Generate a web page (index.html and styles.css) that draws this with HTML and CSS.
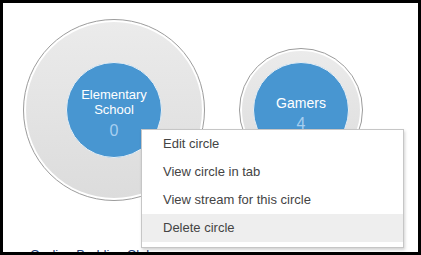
FILE: index.html
```html
<!DOCTYPE html>
<html>
<head>
<meta charset="utf-8">
<link rel="stylesheet" href="styles.css">
</head>
<body>
<div class="frame">
  <div class="circle circle-big">
    <div class="ring">
      <div class="core">
        <span class="name">Elementary<br>School</span>
        <span class="count">0</span>
      </div>
    </div>
  </div>
  <div class="circle circle-small">
    <div class="ring">
      <div class="core">
        <span class="name">Gamers</span>
        <span class="count">4</span>
      </div>
    </div>
  </div>
  <div class="label">Cycling Buddies Club</div>
  <ul class="menu">
    <li class="item">Edit circle</li>
    <li class="item">View circle in tab</li>
    <li class="item">View stream for this circle</li>
    <li class="item active">Delete circle</li>
  </ul>
</div>
</body>
</html>
```
FILE: styles.css
```css
html, body {
  margin: 0;
  padding: 0;
  background: #000;
}
.frame {
  position: relative;
  width: 421px;
  height: 255px;
  box-sizing: border-box;
  border: 3px solid #000;
  background: #fff;
  overflow: hidden;
  font-family: "Liberation Sans", Arial, sans-serif;
}
.circle {
  position: absolute;
  box-sizing: border-box;
  border: 1px solid #9c9c9c;
  border-radius: 50%;
  background: #fff;
  padding: 2px;
  display: flex;
}
.circle-big {
  left: 20px;
  top: 16px;
  width: 182px;
  height: 182px;
}
.circle-small {
  left: 236px;
  top: 45px;
  width: 124px;
  height: 124px;
}
.ring {
  flex: 1;
  border-radius: 50%;
  background: linear-gradient(#ebebeb, #dcdcdc);
  display: flex;
  align-items: center;
  justify-content: center;
}
.core {
  width: 96px;
  height: 96px;
  box-sizing: border-box;
  border-radius: 50%;
  background: #4896d1;
  border: 1px solid #e8f0f6;
  display: flex;
  flex-direction: column;
  align-items: center;
  padding-top: 24px;
  color: #fff;
  text-align: center;
}
.name {
  font-size: 13px;
  line-height: 15px;
}
.count {
  font-size: 16px;
  line-height: 20px;
  margin-top: 4px;
  color: #a6cff0;
}
.circle-small .core {
  padding-top: 33px;
}
.circle-small .name {
  font-size: 14px;
}
.circle-small .count {
  margin-top: 3px;
}
.label {
  position: absolute;
  left: 27px;
  top: 244px;
  font-size: 13px;
  line-height: 15px;
  color: #243c78;
  white-space: nowrap;
}
.menu {
  position: absolute;
  left: 138px;
  top: 126px;
  width: 263px;
  box-sizing: border-box;
  margin: 0;
  padding: 0 0 5px;
  list-style: none;
  background: #fff;
  border: 1px solid #c6c6c6;
  box-shadow: 1px 2px 3px rgba(0, 0, 0, 0.18);
}
.item {
  height: 28px;
  line-height: 28px;
  padding-left: 21px;
  font-size: 13px;
  color: #444;
  white-space: nowrap;
}
.item.active {
  background: #eeeeee;
}
```
